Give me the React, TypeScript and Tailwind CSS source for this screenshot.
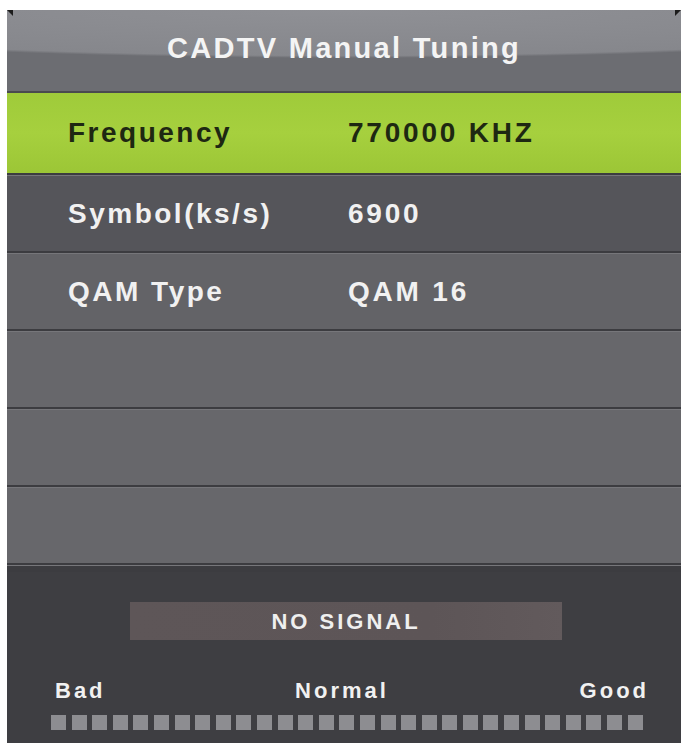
import React from "react"

const rows: { label: string; value: string; active?: boolean; tone?: string }[] = [
  { label: "Frequency", value: "770000 KHZ", active: true },
  { label: "Symbol(ks/s)", value: "6900", tone: "bg-[#55555a]" },
  { label: "QAM Type", value: "QAM 16", tone: "bg-[#636367]" },
  { label: "", value: "", tone: "bg-[#67676b]" },
  { label: "", value: "", tone: "bg-[#67676b]" },
  { label: "", value: "", tone: "bg-[#67676b]" },
]

function MenuRow({ label, value, active, tone }: (typeof rows)[number]) {
  if (active) {
    return (
      <div className="flex h-[80px] items-center bg-[linear-gradient(to_bottom,#9fcb3a_0%,#a6d03e_50%,#9cc636_100%)] text-[#1e2812]">
        <div className="w-[341px] pl-[61px] text-[28px] font-bold tracking-[2.5px]">{label}</div>
        <div className="text-[28px] font-bold tracking-[2.8px]">{value}</div>
      </div>
    )
  }
  return (
    <div className={`flex h-[75px] items-center ${tone} text-[#f1f1f1]`}>
      <div className="w-[341px] pl-[61px] text-[28px] font-bold tracking-[2.5px]">{label}</div>
      <div className="text-[28px] font-bold tracking-[2.8px]">{value}</div>
    </div>
  )
}

function Separator() {
  return (
    <div className="flex flex-col">
      <div className="h-[2px] bg-[#3c3c40]" />
      <div className="h-[1px] bg-[#76767a]" />
    </div>
  )
}

export default function App() {
  const squares = Array.from({ length: 29 })

  return (
    <div
      className="h-[743px] w-[684px] overflow-hidden bg-white pl-[7px] pr-[3px] pt-[10px]"
      style={{ fontFamily: '"Liberation Sans", Arial, sans-serif' }}
    >
      <div className="relative flex h-[733px] flex-col">
        {/* corner marks */}
        <div className="absolute left-0 top-0 h-0 w-0 border-l-[6px] border-t-[6px] border-l-transparent border-t-[#1c1c1c]" />
        <div className="absolute right-0 top-0 h-0 w-0 border-r-[6px] border-t-[6px] border-r-transparent border-t-[#1c1c1c]" />

        {/* Title bar */}
        <div className="flex h-[83px] items-center justify-center border-b-2 border-[#4a4b4f] bg-[radial-gradient(ellipse_700px_48px_at_50%_0%,#8f9095_0%,#86878c_95%,#6c6d72_100%)] pb-[4px] text-[29px] font-bold tracking-[2.3px] text-[#f4f4f4]">
          CADTV Manual Tuning
        </div>

        {/* Menu rows */}
        <div className="flex flex-col">
          {rows.map((row, i) => (
            <React.Fragment key={i}>
              <MenuRow {...row} />
              <Separator />
            </React.Fragment>
          ))}
        </div>
        <div className="h-[6px] bg-[#3c3c40]" />

        {/* Signal area */}
        <div className="flex flex-1 flex-col bg-[#3e3e42]">
          <div className="mt-[30px] flex justify-center">
            <div className="ml-[4px] flex h-[38px] w-[432px] items-center justify-center bg-[linear-gradient(to_right,#5e5658,#5d5557_70%,#625a5c)] text-[22px] font-bold tracking-[3px] text-[#efefef]">
              NO SIGNAL
            </div>
          </div>
          <div className="mt-[34px] flex items-center pl-[48px] pr-[32px] text-[22px] font-bold tracking-[3px] text-[#f1f1f1]">
            <span className="flex-1">Bad</span>
            <span className="mr-[20px]">Normal</span>
            <span className="flex-1 text-right">Good</span>
          </div>
          <div className="mt-[8px] flex justify-between pl-[44px] pr-[38px]">
            {squares.map((_, i) => (
              <div key={i} className="h-[15px] w-[15px] bg-[#8d8d91]" />
            ))}
          </div>
        </div>
      </div>
    </div>
  )
}
